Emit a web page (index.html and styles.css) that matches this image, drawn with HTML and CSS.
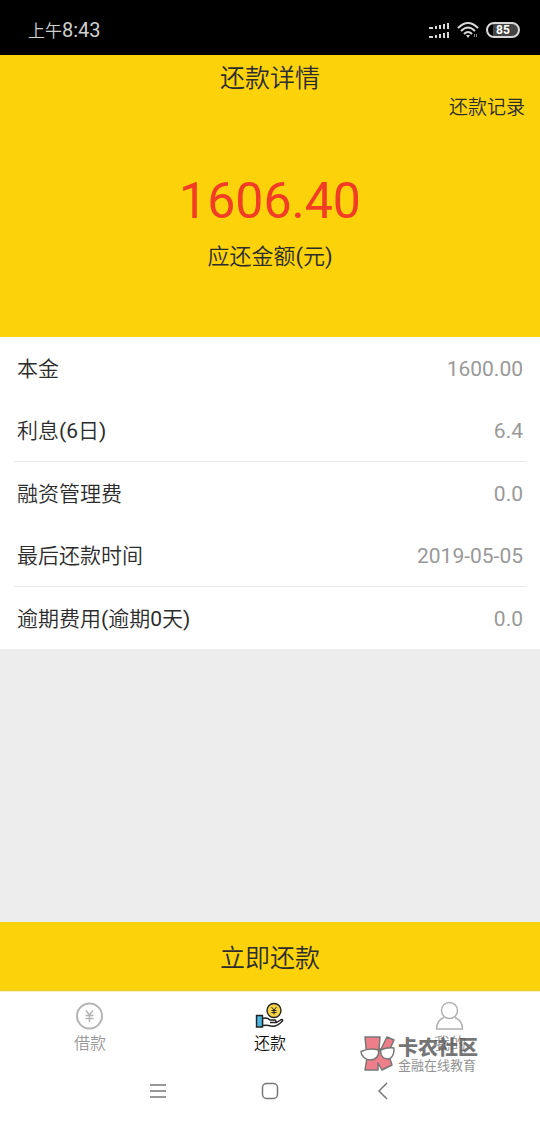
FILE: index.html
```html
<!DOCTYPE html>
<html lang="zh-CN">
<head>
  <meta charset="UTF-8">
  <meta name="viewport" content="width=device-width, initial-scale=1.0">
  <title>还款详情</title>
  <link rel="stylesheet" href="styles.css">
</head>
<body>

<div class="status-bar">
  <div class="time"><span class="ampm">上午</span>8:43</div>
  <div class="status-icons">
    <svg width="22" height="18" viewBox="0 0 22 18" fill="#d8d8d8">
      <path d="M1 6h4v2H1zM7 5h2v3H7zM11 4h2v4h-2zM15 3h2v5h-2zM19 2h2v6h-2zM1 15h4v2H1zM7 14h2v3H7zM11 13h2v4h-2zM15 12h2v5h-2zM19 11h2v6h-2z"/>
    </svg>
    <svg width="22" height="18" viewBox="0 0 22 18" fill="none" stroke="#d8d8d8" stroke-width="2">
      <path d="M1 7Q11 -3 21 7M4 10Q11 3 18 10M7 13Q11 9 15 13"/>
      <path d="M9 14h4l-2 3z" fill="#d8d8d8" stroke="none"/>
      <path d="M17.500 13v3M19.500 13v3" stroke-width="1" stroke="#888"/>
    </svg>
    <div class="battery">85</div>
  </div>
</div>

<header class="summary">
  <h1>还款详情</h1>
  <a class="history" href="#">还款记录</a>
  <div class="amount">1606.40</div>
  <div class="amount-label">应还金额<span class="num">(</span>元<span class="num">)</span></div>
</header>

<main>
  <dl class="details">
    <div class="row"><dt>本金</dt><dd>1600.00</dd></div>
    <div class="row line"><dt>利息<span class="num">(6</span>日<span class="num">)</span></dt><dd>6.4</dd></div>
    <div class="row"><dt>融资管理费</dt><dd>0.0</dd></div>
    <div class="row line"><dt>最后还款时间</dt><dd>2019-05-05</dd></div>
    <div class="row"><dt>逾期费用<span class="num">(</span>逾期<span class="num">0</span>天<span class="num">)</span></dt><dd>0.0</dd></div>
  </dl>
</main>

<button class="pay" type="button">立即还款</button>

<nav class="tabs">
  <a href="#">
    <svg width="30" height="30" viewBox="0 0 30 30" fill="none" stroke="#b4b4b4" stroke-width="2">
      <circle cx="14.500" cy="15" r="12.500"/>
      <path d="M11 9.500l3.500 4.500 3.500-4.500M10.500 14.500h8M10.500 17.500h8M14.500 14v7" stroke-width="1.500"/>
    </svg>
    <span>借款</span>
  </a>
  <a class="active" href="#">
    <svg width="30" height="30" viewBox="0 0 30 30" fill="none" stroke="#222" stroke-width="1.400">
      <circle cx="19" cy="9.500" r="7" fill="#f8d548"/>
      <path d="M16.500 6l2.500 3 2.500-3M16.500 9.500h5M16.500 11.500h5M19 9v4.500" stroke-width="1"/>
      <path d="M7.500 17.500c3-1 5-1 7.500 1.500h4.500c2 0 2 2.500 0 2.500h-4.500 6.500l4-2.500c2-1 3 0 1.500 1.500-4 4-7 5.500-11 4.500-3-1-5-1-8.500-.5z" fill="#fff"/>
      <path d="M1.500 14.500h6v11.500h-6z" fill="#4db4e0"/>
    </svg>
    <span>还款</span>
  </a>
  <a href="#">
    <svg width="30" height="30" viewBox="0 0 30 30" fill="none" stroke="#b0b0b0" stroke-width="1.500">
      <circle cx="14.500" cy="9.500" r="8"/>
      <path d="M9 16.500C4 18.500 1.500 22.500 1.500 28h26c0-5.500-2.500-9.500-7.500-11.500"/>
    </svg>
    <span>我的</span>
  </a>

  <div class="watermark">
    <svg width="36" height="36" viewBox="0 0 36 36" fill="#ea5f6e" stroke="#555" stroke-width="1.500" stroke-linejoin="round">
      <path d="M5 1h15l-1 12h2l6-12 7 3-6 13 4 12-10 5-4-7v7H5l2-12z"/>
      <path d="M1 15.500q8.500-4 17.500-1.500c1 6-3 10-8 10S1 20 1 15.500zM20.500 14q7-3 13.500-2c.5 6-2 11-6.500 11s-7-4-7-9z" fill="#fff"/>
      <path d="M18 15l3-1"/>
    </svg>
    <div>
      <div class="brand">卡农社区</div>
      <div class="slogan">金融在线教育</div>
    </div>
  </div>
</nav>

<div class="system-nav">
  <svg width="20" height="20" viewBox="0 0 20 20" fill="none" stroke="#777" stroke-width="1.500">
    <path d="M2 4h16M2 10h16M2 16h16"/>
  </svg>
  <svg width="20" height="20" viewBox="0 0 20 20" fill="none" stroke="#777" stroke-width="1.500">
    <rect x="2.500" y="2.500" width="15" height="15" rx="4"/>
  </svg>
  <svg width="20" height="20" viewBox="0 0 20 20" fill="none" stroke="#777" stroke-width="1.500">
    <path d="M15 2l-8 8 8 8"/>
  </svg>
</div>

</body>
</html>
```
FILE: styles.css
```css
* {
  box-sizing: border-box;
}

body {
  margin: 0;
  min-height: 100vh;
  display: flex;
  flex-direction: column;
  background: #ededed;
  color: #2c2c2c;
  font-family: Roboto, "Noto Sans CJK SC", sans-serif;
  font-size: 21px;
}

a {
  color: inherit;
  text-decoration: none;
}

svg {
  display: block;
}

.status-bar {
  height: 55px;
  padding: 4px 20px 0 28px;
  display: flex;
  align-items: center;
  justify-content: space-between;
  background: #000;
  color: #d0d0d0;
  font-size: 20px;
}

.ampm {
  font-size: 17px;
  font-weight: 350;
}

.num {
  font-weight: 400;
}

.status-icons {
  display: flex;
  align-items: center;
  gap: 7px;
}

.battery {
  width: 34px;
  height: 16px;
  border: 2px solid #d8d8d8;
  border-radius: 8px;
  background: linear-gradient(to right, #000 5px, #444 5px);
  color: #fff;
  font-size: 12px;
  font-weight: bold;
  line-height: 12px;
  text-align: center;
}

.summary {
  height: 282px;
  background: #fcd30b;
  text-align: center;
}

h1 {
  margin: 0;
  padding-top: 7px;
  font-size: 25px;
  font-weight: 350;
  line-height: 34px;
}

.history {
  display: block;
  padding-right: 15px;
  font-size: 19px;
  font-weight: 350;
  line-height: 24px;
  text-align: right;
}

.amount {
  margin-top: 51px;
  color: #f23c26;
  font-size: 50px;
  line-height: 60px;
}

.amount-label {
  margin-top: 11px;
  font-size: 22px;
  font-weight: 350;
  line-height: 30px;
}

main {
  flex: 1;
}

.details {
  margin: 0;
  padding: 0 14px;
  background: #fff;
}

.row {
  padding: 2px 3px 0;
  display: flex;
  justify-content: space-between;
  line-height: 60px;
}

.line {
  border-bottom: 1px solid #e8e8e8;
}

dt {
  font-weight: 350;
}

dd {
  margin: 0;
  color: #999;
}

.pay {
  height: 69px;
  padding: 0;
  border: 0;
  border-bottom: 1px solid #ecca38;
  background: #fcd30b;
  color: #2c2c2c;
  font-family: inherit;
  font-size: 25px;
  font-weight: 350;
}

.tabs {
  position: relative;
  height: 67px;
  padding-top: 9px;
  display: flex;
  border-top: 1px solid #fdf0b8;
  background: #fff;
  color: #999;
  font-size: 16px;
  font-weight: 350;
  line-height: 26px;
}

.tabs a {
  flex: 1;
  display: flex;
  flex-direction: column;
  align-items: center;
}

.tabs .active {
  color: #111;
}

.watermark {
  position: absolute;
  top: 44px;
  right: 62px;
  display: flex;
  gap: 2px;
  color: #555;
  opacity: 0.8;
}

.brand {
  font-size: 20px;
  font-weight: 900;
  line-height: 24px;
}

.slogan {
  color: #777;
  font-size: 13px;
  font-weight: 400;
  line-height: 12px;
}

.system-nav {
  height: 66px;
  padding: 0 148px;
  display: flex;
  align-items: center;
  justify-content: space-between;
  background: #fff;
}
```
